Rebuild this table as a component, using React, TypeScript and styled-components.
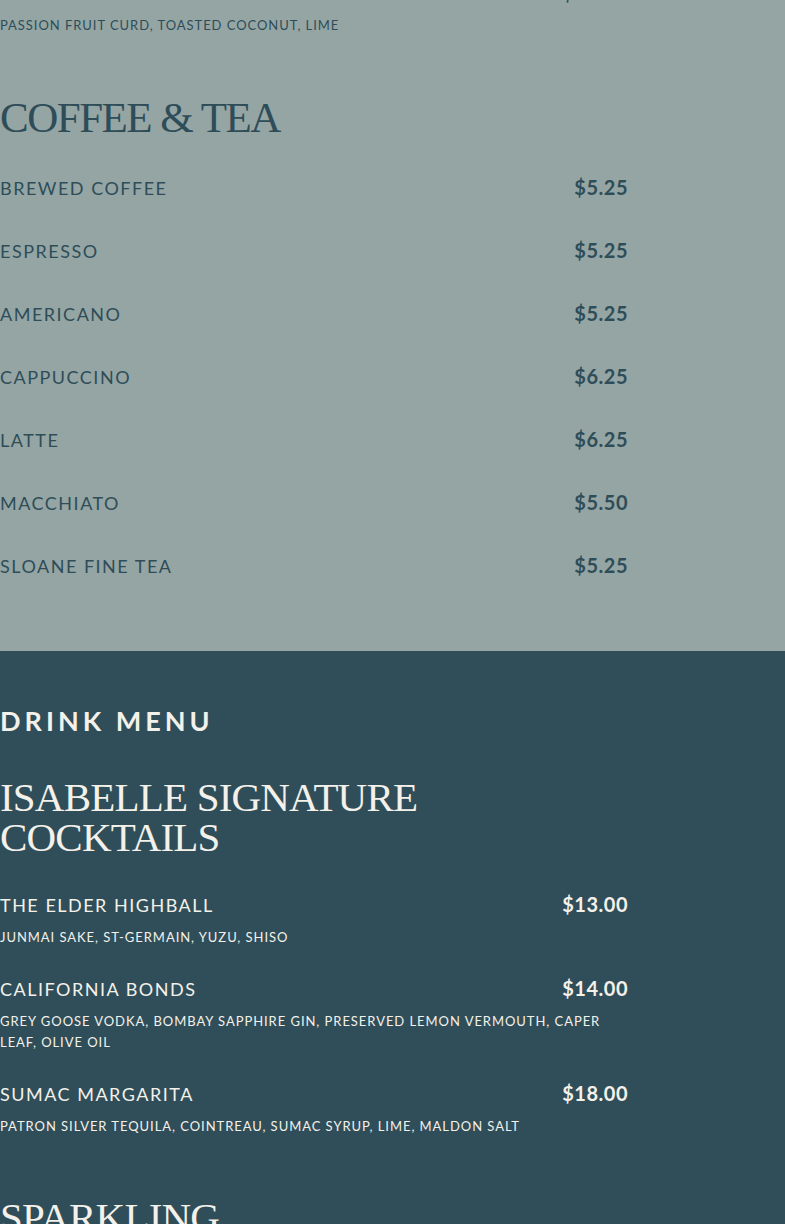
import React from "react";
import styled, { createGlobalStyle } from "styled-components";

const GlobalStyle = createGlobalStyle`
  html, body { margin: 0; padding: 0; }
  body { font-family: "Lato", "Liberation Sans", sans-serif; background: #2f4e59; }
  * { box-sizing: border-box; }
`;

type Tone = "light" | "dark";

const palette = {
  light: { bg: "#95a5a4", fg: "#2e4d58" },
  dark: { bg: "#2f4e59", fg: "#f4f1ea" },
};

const Page = styled.main`
  width: 785px;
  overflow: hidden;
`;

/* the page is shown scrolled: the first item's name sits above the viewport */
const Scroller = styled.div`
  margin-top: -20px;
`;

const Section = styled.section<{ $tone: Tone }>`
  background: ${(p) => palette[p.$tone].bg};
  color: ${(p) => palette[p.$tone].fg};
  padding: ${(p) => (p.$tone === "dark" ? "54px 0 0" : "0 0 74px")};
`;

const Column = styled.div`
  width: 628px;
`;

const Eyebrow = styled.h1`
  margin: 0;
  font-family: "Lato", sans-serif;
  font-weight: 700;
  font-size: 27px;
  line-height: 32px;
  letter-spacing: 4px;
`;

const CategoryTitle = styled.h2<{ $size: number; $lh: number; $track: number; $after: "eyebrow" | "item" }>`
  margin: ${(p) => (p.$after === "eyebrow" ? "40px" : "60px")} 0 35px;
  font-family: "Liberation Serif", serif;
  font-weight: 400;
  font-size: ${(p) => p.$size}px;
  line-height: ${(p) => p.$lh}px;
  letter-spacing: ${(p) => p.$track}px;
  text-transform: uppercase;
`;

const ItemList = styled.ul<{ $gap: number }>`
  list-style: none;
  margin: 0;
  padding: 0;
  display: flex;
  flex-direction: column;
  gap: ${(p) => p.$gap}px;
`;

const Item = styled.li``;

const ItemRow = styled.div`
  display: flex;
  justify-content: space-between;
  align-items: baseline;
  height: 24px;
`;

const ItemName = styled.span`
  font-size: 18px;
  line-height: 24px;
  letter-spacing: 1.5px;
  text-transform: uppercase;
`;

const Price = styled.span`
  font-size: 20px;
  line-height: 24px;
  font-weight: 700;
  letter-spacing: 0.5px;
`;

const Description = styled.p`
  margin: 11px 0 0;
  font-size: 13px;
  line-height: 21px;
  letter-spacing: 0.95px;
  text-transform: uppercase;
`;

type MenuItem = { name: string; price: string; desc?: string };

const coffee: MenuItem[] = [
  { name: "Brewed Coffee", price: "$5.25" },
  { name: "Espresso", price: "$5.25" },
  { name: "Americano", price: "$5.25" },
  { name: "Cappuccino", price: "$6.25" },
  { name: "Latte", price: "$6.25" },
  { name: "Macchiato", price: "$5.50" },
  { name: "Sloane Fine Tea", price: "$5.25" },
];

const cocktails: MenuItem[] = [
  { name: "The Elder Highball", price: "$13.00", desc: "Junmai Sake, St-Germain, Yuzu, Shiso" },
  {
    name: "California Bonds",
    price: "$14.00",
    desc: "Grey Goose Vodka, Bombay Sapphire Gin, Preserved Lemon Vermouth, Caper Leaf, Olive Oil",
  },
  {
    name: "Sumac Margarita",
    price: "$18.00",
    desc: "Patron Silver Tequila, Cointreau, Sumac Syrup, Lime, Maldon Salt",
  },
];

const dessertTail: MenuItem[] = [
  { name: "Coconut Pavlova", price: "$14.00", desc: "Passion Fruit Curd, Toasted Coconut, Lime" },
];

function Items({ items, gap }: { items: MenuItem[]; gap: number }) {
  return (
    <ItemList $gap={gap}>
      {items.map((it) => (
        <Item key={it.name}>
          <ItemRow>
            <ItemName>{it.name}</ItemName>
            <Price>{it.price}</Price>
          </ItemRow>
          {it.desc && <Description>{it.desc}</Description>}
        </Item>
      ))}
    </ItemList>
  );
}

export default function App() {
  return (
    <Page>
      <GlobalStyle />
      <Scroller>
        <Section $tone="light">
          <Column>
            <Items items={dessertTail} gap={28} />
            <CategoryTitle $size={43} $lh={44} $track={-1.5} $after="item">
              Coffee &amp; Tea
            </CategoryTitle>
            <Items items={coffee} gap={39} />
          </Column>
        </Section>
        <Section $tone="dark">
          <Column>
            <Eyebrow>DRINK MENU</Eyebrow>
            <CategoryTitle $size={41} $lh={40} $track={-0.8} $after="eyebrow">
              Isabelle Signature Cocktails
            </CategoryTitle>
            <Items items={cocktails} gap={28} />
            <CategoryTitle $size={41} $lh={40} $track={-0.8} $after="item">
              Sparkling
            </CategoryTitle>
          </Column>
        </Section>
      </Scroller>
    </Page>
  );
}
